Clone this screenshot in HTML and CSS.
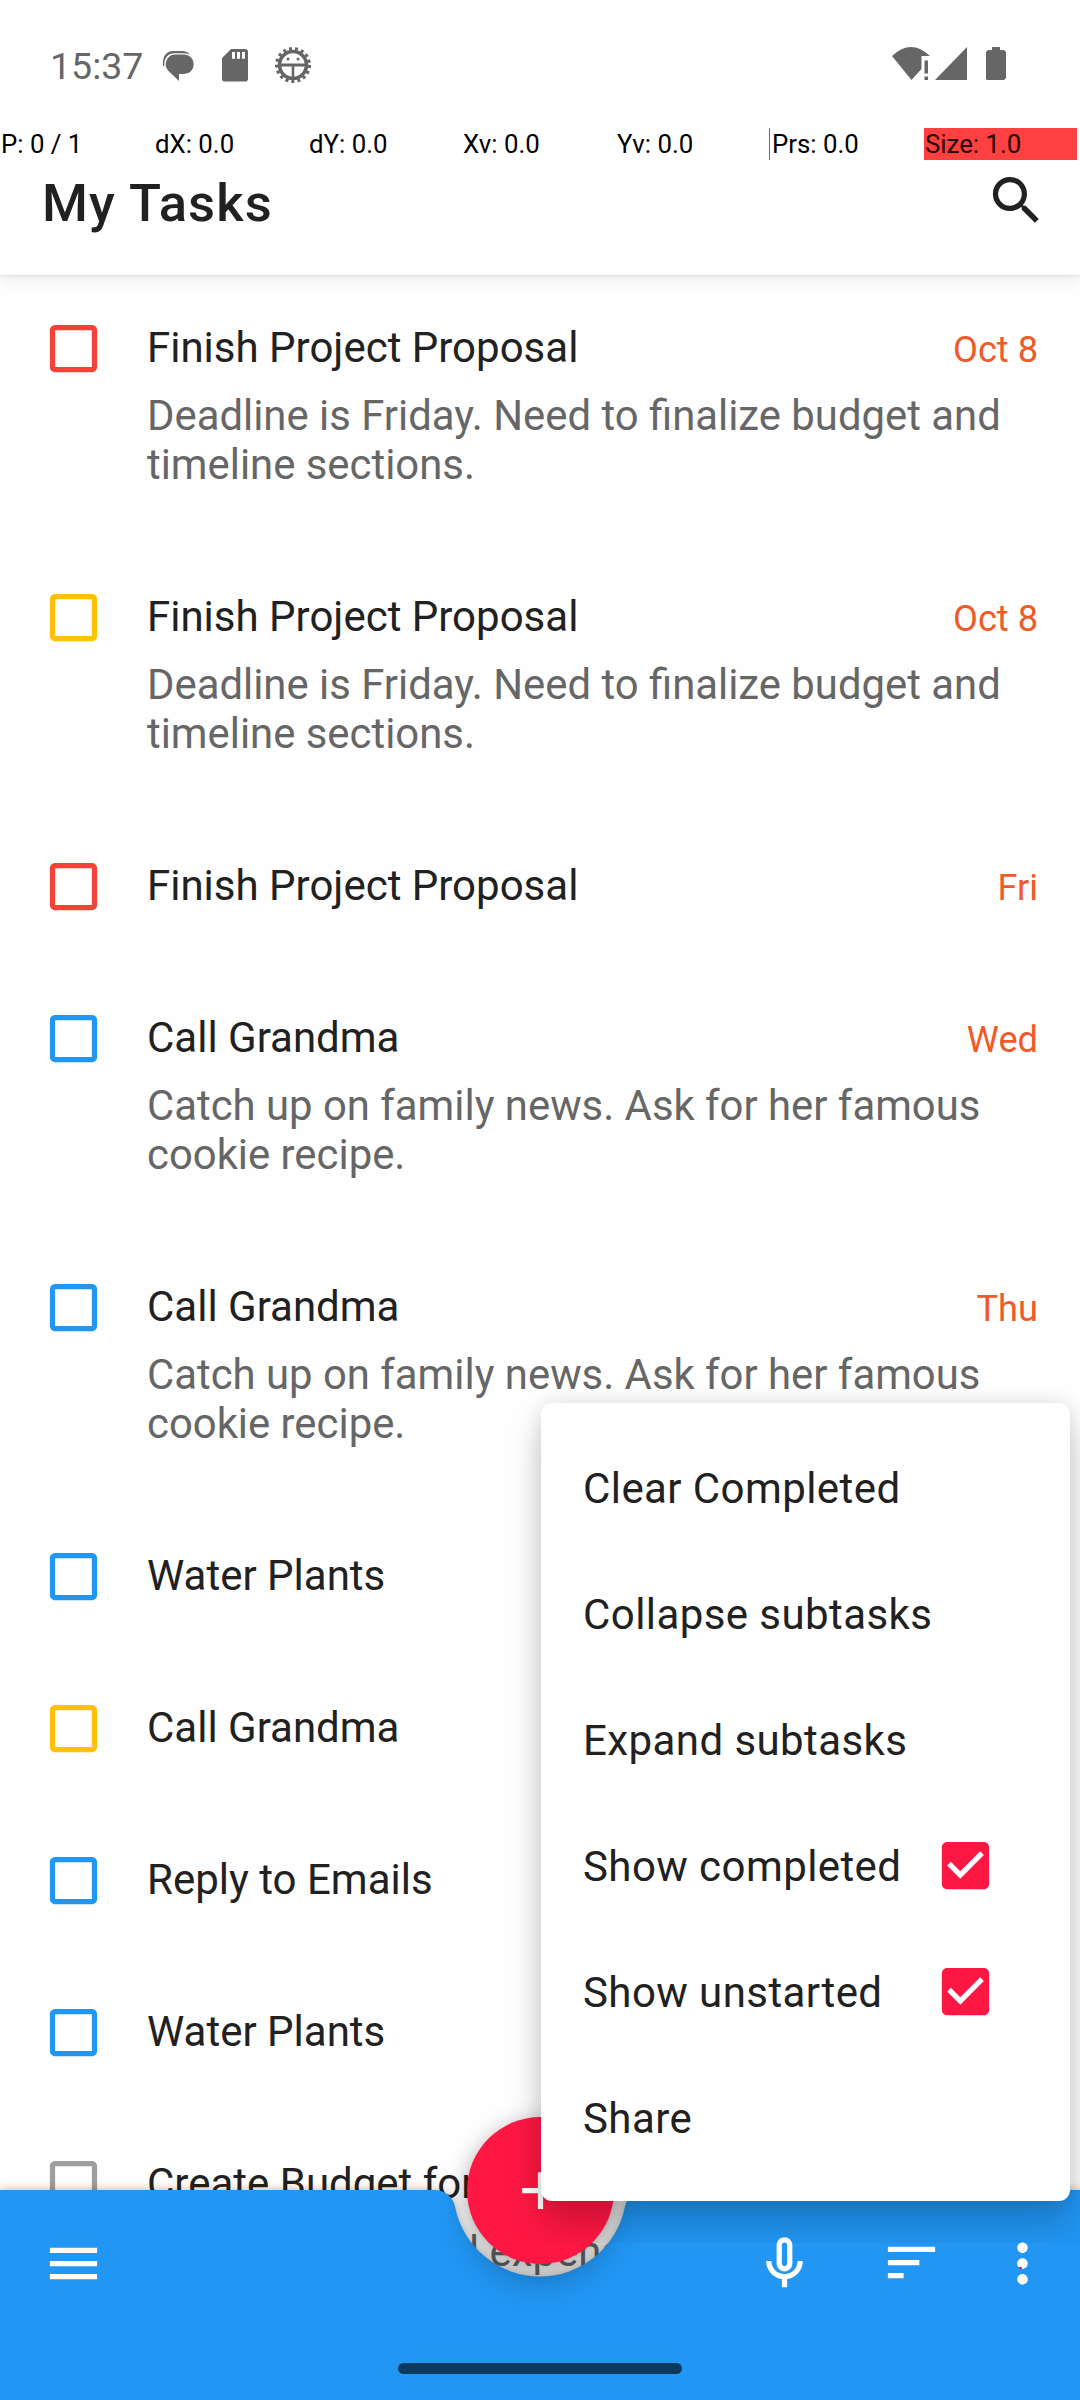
FILE: index.html
```html
<!DOCTYPE html>
<html lang="en">
<head>
<meta charset="utf-8">
<title>My Tasks</title>
<link rel="stylesheet" href="styles.css">
</head>
<body>
<svg class="defs" width="0" height="0">
  <symbol id="box" viewBox="0 0 24 24"><path d="M19 5v14H5V5h14m0-2H5c-1.1 0-2 .9-2 2v14c0 1.1.9 2 2 2h14c1.1 0 2-.9 2-2V5c0-1.1-.9-2-2-2z"/></symbol>
  <symbol id="checked" viewBox="0 0 24 24"><path d="M19 3H5c-1.11 0-2 .9-2 2v14c0 1.1.89 2 2 2h14c1.11 0 2-.9 2-2V5c0-1.1-.89-2-2-2zm-9 14l-5-5 1.41-1.41L10 14.17l7.59-7.59L19 8l-9 9z"/></symbol>
</svg>
<div class="screen">
  <header class="appbar">
    <div class="status">
      <span class="clock">15:37</span>
      <svg class="st-chat" width="32" height="32" viewBox="0 0 32 32"><path d="M12.500 4.500H22a9.500 9.500 0 0 1 0 19.500H17V31L6 20.500A9.800 9.800 0 0 1 12.500 4.500Z"/><path d="M1 16C0 6 5 1 11 1H20Q25 1 28 4.500Q24 3.200 20 3.200H12C6 3.200 1.800 8 2.300 16Z"/></svg>
      <svg class="st-sd" width="26" height="33" viewBox="0 0 26 33"><path fill-rule="evenodd" d="M9 0H23a3 3 0 0 1 3 3V30a2.500 2.500 0 0 1-3 2.500H3a2.500 2.500 0 0 1-3-2.500V9ZM10 3V9.800H13V3ZM15 3V9.800H18V3ZM20 3V9.800H23V3Z"/></svg>
      <svg class="st-bug" width="38" height="38" viewBox="-19 -19 38 38"><circle r="13.500" fill="none" stroke="#666" stroke-width="3.600"/><circle r="16.300" fill="none" stroke="#666" stroke-width="3.400" stroke-dasharray="3 3.024"/><path d="M-13-1.500H13V1.500H1.300V13H-1.300V1.500H-13Z"/><circle cx="-5" cy="-6" r="1.500"/><circle cx="5" cy="-6" r="1.500"/></svg>
      <span class="grow"></span>
      <svg class="st-wifi" width="38" height="34" viewBox="0 0 38 34"><path d="M0 9Q19-9 38 9H29.500V22L19.500 33Z"/><path d="M32.500 13.500h3.500v13h-3.500zM32.500 29.500h3.500v3.500h-3.500z"/></svg>
      <svg class="st-cell" width="32" height="33" viewBox="0 0 32 33"><path d="M0 33L32 0V33Z"/></svg>
      <svg class="st-batt" width="20" height="33" viewBox="0 0 20 33"><path d="M6 0h8v3h4l2 2V31l-2 2H1l-1-1V5l2-2h4z"/></svg>
    </div>
    <div class="pointer">
      <span>P: 0 / 1</span><span>dX: 0.0</span><span>dY: 0.0</span><span>Xv: 0.0</span><span>Yv: 0.0</span><span class="prs">Prs: 0.0</span><span class="size">Size: 1.0</span>
    </div>
    <div class="titlebar">
      <h1>My Tasks</h1>
      <svg class="search" width="63" height="63" viewBox="0 0 24 24"><path d="M15.500 14h-.79l-.28-.27C15.410 12.590 16 11.110 16 9.500 16 5.910 13.090 3 9.500 3S3 5.910 3 9.500 5.910 16 9.500 16c1.610 0 3.090-.59 4.230-1.570l.27.28v.79l5 4.990L20.490 19l-4.990-5zm-6 0C7.010 14 5 11.990 5 9.500S7.010 5 9.500 5 14 7.010 14 9.500 11.990 14 9.500 14z"/></svg>
    </div>
  </header>

  <main class="list">
    <div class="task red"><svg class="box"><use href="#box"/></svg><div class="body"><div class="head"><span>Finish Project Proposal</span><time>Oct 8</time></div><p>Deadline is Friday. Need to finalize budget and<br>timeline sections.</p></div></div>
    <div class="task yellow"><svg class="box"><use href="#box"/></svg><div class="body"><div class="head"><span>Finish Project Proposal</span><time>Oct 8</time></div><p>Deadline is Friday. Need to finalize budget and<br>timeline sections.</p></div></div>
    <div class="task red"><svg class="box"><use href="#box"/></svg><div class="body"><div class="head"><span>Finish Project Proposal</span><time>Fri</time></div></div></div>
    <div class="task blue"><svg class="box"><use href="#box"/></svg><div class="body"><div class="head"><span>Call Grandma</span><time>Wed</time></div><p>Catch up on family news. Ask for her famous<br>cookie recipe.</p></div></div>
    <div class="task blue"><svg class="box"><use href="#box"/></svg><div class="body"><div class="head"><span>Call Grandma</span><time>Thu</time></div><p>Catch up on family news. Ask for her famous<br>cookie recipe.</p></div></div>
    <div class="task blue"><svg class="box"><use href="#box"/></svg><div class="body"><div class="head"><span>Water Plants</span></div></div></div>
    <div class="task yellow"><svg class="box"><use href="#box"/></svg><div class="body"><div class="head"><span>Call Grandma</span></div></div></div>
    <div class="task blue"><svg class="box"><use href="#box"/></svg><div class="body"><div class="head"><span>Reply to Emails</span></div></div></div>
    <div class="task blue"><svg class="box"><use href="#box"/></svg><div class="body"><div class="head"><span>Water Plants</span></div></div></div>
    <div class="task gray"><svg class="box"><use href="#box"/></svg><div class="body"><div class="head"><span>Create Budget for</span></div><p class="tucked">l expenses</p></div></div>
  </main>

  <nav class="bottombar">
    <svg class="barshape" width="1080" height="210" viewBox="0 0 1080 210"><path d="M0 0H434.500A21 21 0 0 1 455.100 16.900A86.600 86.600 0 0 0 624.900 16.900A21 21 0 0 1 645.500 0H1080V210H0Z"/></svg>
    <div class="actions">
      <svg width="63" height="63" viewBox="0 0 24 24"><path d="M3 18h18v-2H3v2zm0-5h18v-2H3v2zm0-7v2h18V6H3z"/></svg>
      <span class="grow"></span>
      <svg class="mic" width="63" height="63" viewBox="0 0 24 24"><path d="M12 15c1.660 0 3-1.340 3-3V5c0-1.660-1.340-3-3-3S9 3.340 9 5v7c0 1.660 1.340 3 3 3zm-1-10c0-.55.45-1 1-1s1 .45 1 1v7c0 .55-.45 1-1 1s-1-.45-1-1V5zm6 6c0 2.760-2.240 5-5 5s-5-2.240-5-5H5c0 3.530 2.610 6.430 6 6.920V21h2v-3.080c3.390-.49 6-3.390 6-6.920h-2z"/></svg>
      <svg class="sort" width="63" height="63" viewBox="0 0 24 24"><path d="M3 18h6v-2H3v2zM3 6v2h18V6H3zm0 7h12v-2H3v2z"/></svg>
      <svg class="more" width="63" height="63" viewBox="0 0 24 24"><path d="M12 8c1.100 0 2-.9 2-2s-.9-2-2-2-2 .9-2 2 .9 2 2 2zm0 2c-1.100 0-2 .9-2 2s.9 2 2 2 2-.9 2-2-.9-2-2-2zm0 6c-1.100 0-2 .9-2 2s.9 2 2 2 2-.9 2-2-.9-2-2-2z"/><path fill="#c2185b" d="M10.700 13.300h1v.8h-1z"/></svg>
    </div>
    <div class="home"></div>
  </nav>
  <div class="fab"><svg width="63" height="63" viewBox="0 0 24 24"><path d="M19 13h-6v6h-2v-6H5v-2h6V5h2v6h6v2z"/></svg></div>

  <div class="menu-layer">
    <div class="menu">
      <div class="item"><span>Clear Completed</span></div>
      <div class="item"><span>Collapse subtasks</span></div>
      <div class="item"><span>Expand subtasks</span></div>
      <div class="item"><span>Show completed</span><svg><use href="#checked"/></svg></div>
      <div class="item"><span>Show unstarted</span><svg><use href="#checked"/></svg></div>
      <div class="item"><span>Share</span></div>
    </div>
  </div>
</div>
</body>
</html>
```
FILE: styles.css
```css
* { box-sizing: border-box; }
body { margin: 0; font-family: Roboto, "Liberation Sans", sans-serif; }
h1, p { margin: 0; }
svg { display: block; flex: none; }
.defs { position: absolute; }
.grow { flex: 1; }
.screen { position: relative; width: 1080px; height: 2400px; overflow: hidden; background: #fefefe; }

.appbar { position: relative; height: 275px; background: #fff; box-shadow: 0 1px 2px rgba(0,0,0,.09), 0 5px 16px rgba(0,0,0,.08); z-index: 1; }
.status { display: flex; align-items: flex-start; height: 128px; padding: 48px 74px 0 50px; color: #666; fill: #666; }
.clock { width: 112px; font-size: 37.500px; line-height: 37px; }
.st-chat { margin-top: 2px; margin-right: 28px; }
.st-sd { margin-top: 1px; margin-right: 26px; }
.st-bug { margin-top: -2px; }
.st-wifi { margin-top: -1px; }
.st-cell { margin: -1px 19px 0 5px; }
.st-batt { margin-top: -1px; }
.pointer { display: grid; grid-template-columns: repeat(7, 154px); height: 32px; font-size: 25.800px; line-height: 32px; color: #000; }
.pointer span { padding-left: 1px; }
.pointer .prs { margin-left: -1px; border-left: 1px solid #c94a4a; padding-left: 2px; }
.pointer .size { width: 153px; background: #ff4040; color: #200; }
.titlebar { display: flex; justify-content: space-between; padding: 9px 32px 0 42px; }
.titlebar h1 { margin-top: 4px; font-size: 52.500px; line-height: 60px; font-weight: 500; color: #212121; letter-spacing: 1.150px; }
.search { fill: #212121; }

.list { height: 1915px; }
.task { display: flex; height: 152px; padding: 42px 42px 0; }
.task:has(p) { height: 269px; }
.box { width: 63px; height: 63px; margin-right: 42px; }
.body { flex: 1; }
.head { display: flex; justify-content: space-between; align-items: baseline; height: 62px; padding-top: 6px; font-size: 42px; line-height: 49px; color: #212121; }
time { font-size: 36.200px; color: #f05a28; }
.task p { padding-top: 12px; font-size: 41.850px; line-height: 49px; color: #666; white-space: nowrap; }
.task .tucked { padding-left: 322px; }
.red { fill: #f44336; }
.yellow { fill: #ffc107; }
.blue { fill: #2196f3; }
.gray { fill: #9e9e9e; }

.bottombar { position: relative; height: 210px; display: flex; flex-direction: column; align-items: center; }
.barshape { position: absolute; left: 0; top: 0; overflow: visible; fill: #2196f3; filter: drop-shadow(0 0 5px rgba(0,0,0,.3)); }
.actions { position: relative; display: flex; width: 1080px; height: 147px; padding: 42px 26px 0 42px; fill: #fff; }
.mic { margin-right: 64px; }
.sort { margin: -1px 48px 0 0; }
.home { position: relative; margin-top: 26px; width: 284px; height: 11px; border-radius: 6px; background: #0a3b5f; }
.fab { position: absolute; left: 467px; top: 2117px; width: 147px; height: 147px; border-radius: 50%; display: flex; align-items: center; justify-content: center; background: #ff1744; fill: #fff; box-shadow: 0 18px 30px rgba(0,0,0,.22), 0 0 20px rgba(0,0,0,.17); }

.menu-layer { position: absolute; left: 500px; top: 1363px; width: 580px; height: 880px; padding: 40px 10px 0 41px; overflow: hidden; }
.menu { height: 798px; padding: 21px 42px; border-radius: 11px; background: #fff; box-shadow: 0 24px 36px rgba(0,0,0,.18), 0 0 20px rgba(0,0,0,.12); }
.item { display: flex; align-items: center; justify-content: space-between; height: 126px; padding-right: 31px; font-size: 42px; letter-spacing: .420px; color: #212121; }
.item span { padding-top: 2px; }
.item svg { width: 63px; height: 63px; fill: #ff1744; }
```
